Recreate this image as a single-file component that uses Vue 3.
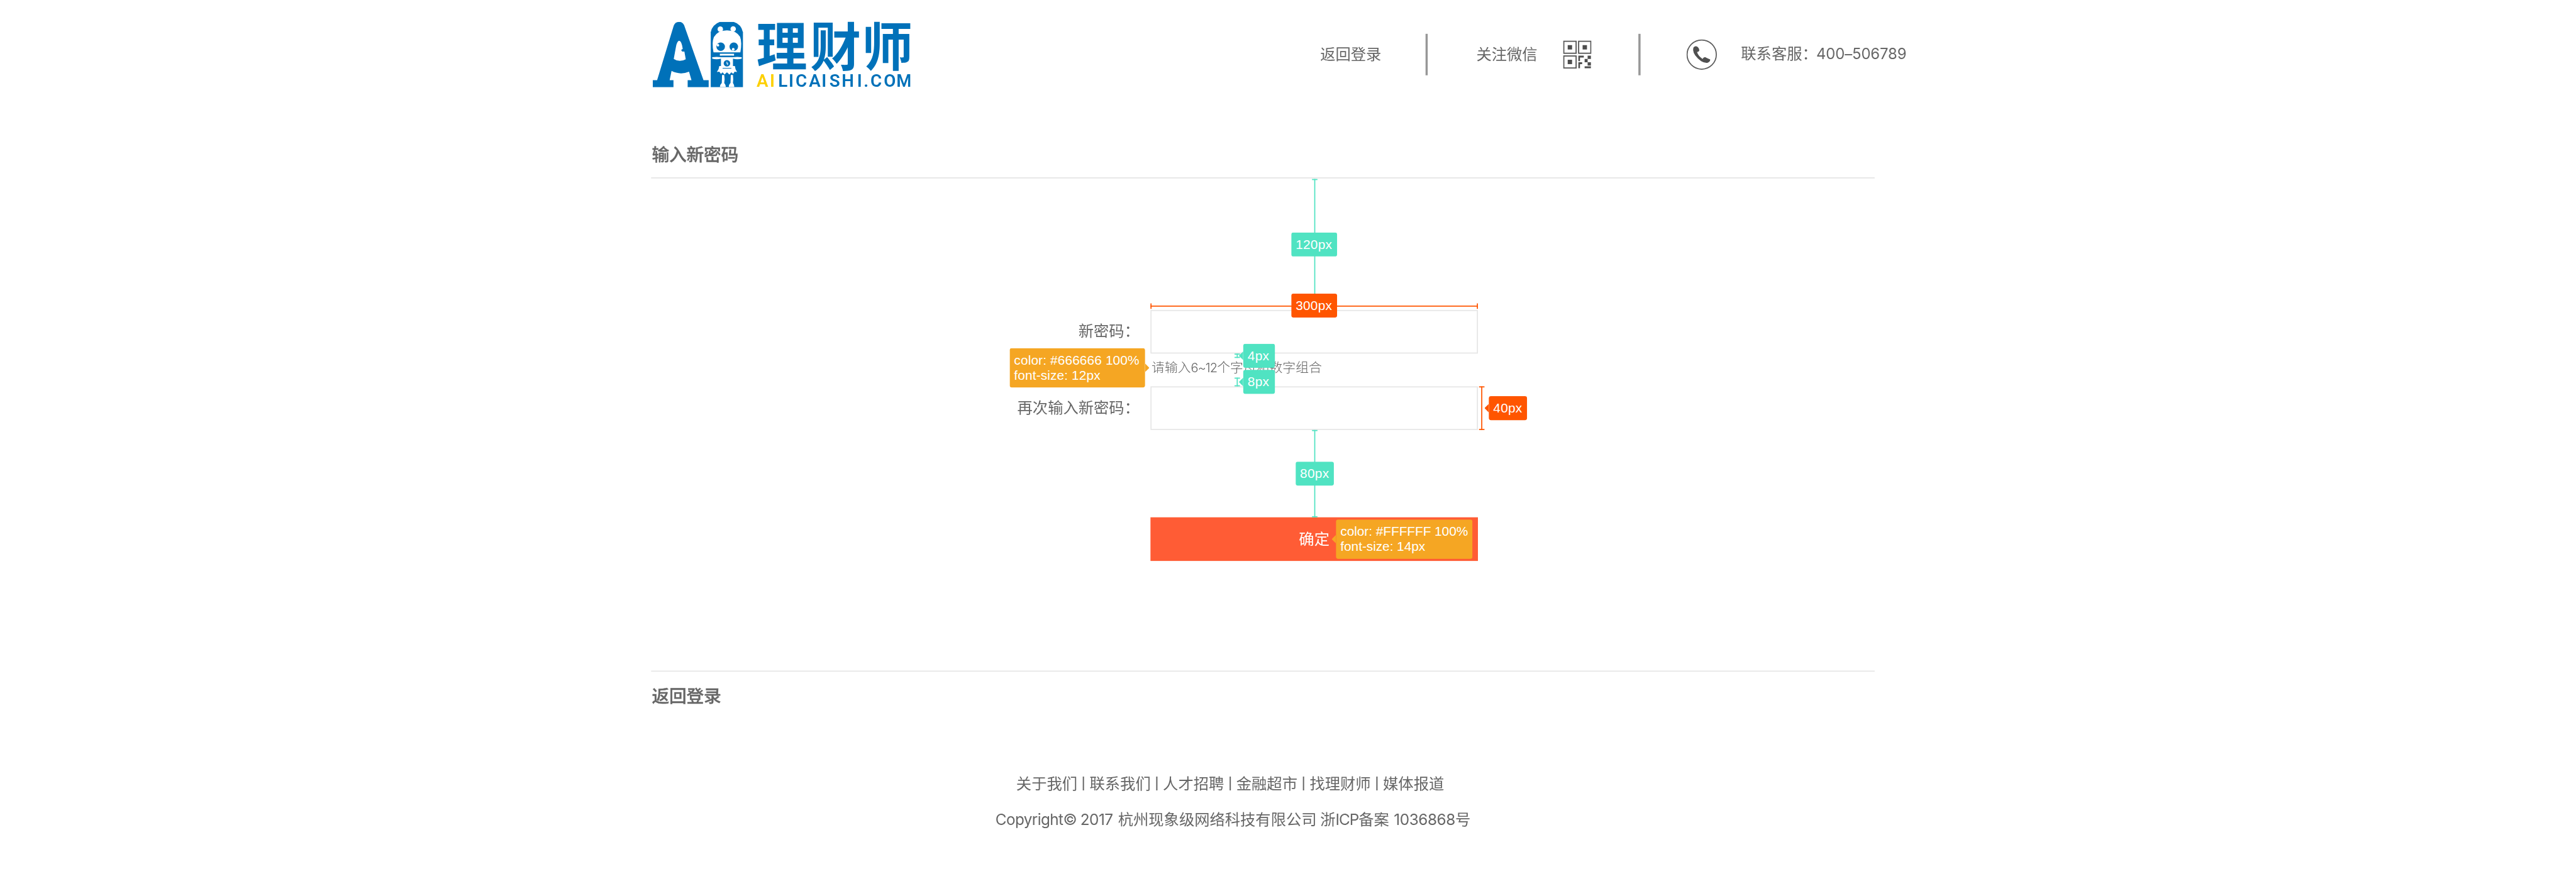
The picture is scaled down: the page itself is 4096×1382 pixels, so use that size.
<script setup>
const footerLinks = ['关于我们', '联系我们', '人才招聘', '金融超市', '找理财师', '媒体报道']

// Measuring bars: x/y of the box, its length, its direction and colour
const rulers = [
  { id: 'v120', dir: 'v', tone: 'green', x: 2404, y: 328, len: 240 },
  { id: 'h300', dir: 'h', tone: 'red', x: 2108, y: 556, len: 600 },
  { id: 'v4', dir: 'v', tone: 'green', x: 2262, y: 648, len: 8 },
  { id: 'v8', dir: 'v', tone: 'green', x: 2262, y: 692, len: 16 },
  { id: 'v40', dir: 'v', tone: 'red', x: 2710, y: 708, len: 80 },
  { id: 'v80', dir: 'v', tone: 'green', x: 2404, y: 788, len: 160 },
]

const tags = [
  { id: 't120', tone: 'green', x: 2366, y: 426, w: 84, lines: ['120px'] },
  { id: 't300', tone: 'red', x: 2366, y: 538, w: 84, lines: ['300px'] },
  { id: 't4', tone: 'green', arrow: 'left', x: 2278, y: 630, w: 58, lines: ['4px'] },
  { id: 't8', tone: 'green', arrow: 'left', x: 2278, y: 678, w: 58, lines: ['8px'] },
  { id: 't40', tone: 'red', arrow: 'left', x: 2728, y: 726, w: 70, lines: ['40px'] },
  { id: 't80', tone: 'green', x: 2374, y: 846, w: 70, lines: ['80px'] },
  { id: 'spec-hint', tone: 'amber', arrow: 'right', x: 1850, y: 638, w: 248, lines: ['color: #666666 100%', 'font-size: 12px'] },
  { id: 'spec-button', tone: 'amber', arrow: 'left', x: 2448, y: 952, w: 250, lines: ['color: #FFFFFF 100%', 'font-size: 14px'] },
]

const logoLetters = [
  ['A', 201], ['I', 219], ['L', 238.5], ['I', 253.7], ['C', 272.3], ['A', 297], ['I', 314],
  ['S', 333.3], ['H', 357.5], ['I', 379], ['.', 391], ['C', 409.3], ['O', 434.5], ['M', 460.5],
]
const brandXs = logoLetters.map((l) => l[1]).join(' ')

function rulerStyle(r) {
  const size = r.dir === 'v' ? { height: r.len + 'px' } : { width: r.len + 'px' }
  return { left: r.x + 'px', top: r.y + 'px', ...size }
}
function tagStyle(t) {
  return { left: t.x + 'px', top: t.y + 'px', width: t.w + 'px' }
}
</script>

<template>
  <div class="viewport">
    <div class="page">
      <header class="header">
        <svg class="logo" width="472" height="120" viewBox="0 0 472 120">
          <g fill="#0071b9">
            <path
              fill-rule="evenodd"
              d="M0 120V107H8L38.500 7Q41 0 48 0Q54.500 0 57.500 6L93 107H102.500V120H64V107H71L66.500 91.500Q50 98 34.500 90L31 107H38V120ZM38.500 68Q49 75 60.500 68.500L58 54.500L54 54.500L52 51.500L55 49.500Q53 35 48.500 34.500Q44.500 35 42.500 46Z"
            />
            <path d="M106.300 120V19Q109 5 123 0H148Q162 4 165.300 19V120Z" />
          </g>
          <g fill="#fff">
            <circle cx="123.800" cy="13.500" r="5" />
            <circle cx="147.400" cy="13" r="5" />
            <path d="M111.300 56Q108 38 112 28Q119 15.500 136 15.500Q153 15.500 160 27.500Q164 38 160.500 56Z" />
            <path d="M123 58.500H149V62H123Z" />
            <path d="M109 65Q117 63.500 125 65H147Q155 63.500 163 65V67.500Q155 69.500 147 67.500V81H150.500Q151 87 154.500 92L150 91.500L147.500 95.500L144 92.500L140.500 96.500L136 92.500L131.500 96.500L128 92.500L125 95.500L122 91.500L117.500 92Q121.500 87 122 81H125V67.500Q117 69.500 109 67.500Z" />
            <path d="M127 97.500H131Q132.500 106 131 112Q134.500 116 134 119.500H123Q123 115 126.500 112ZM143 97.500H147Q148 106 147 112Q150 116 149.500 119.500H139.500Q139 115 142.500 112Z" />
          </g>
          <g fill="#0071b9">
            <circle cx="124.500" cy="45.500" r="7.800" />
            <circle cx="148.500" cy="45.500" r="7.800" />
            <circle cx="136" cy="76" r="6" />
            <path d="M126 62.300H146V63.500H126ZM128 84.500H144V85.500H128Z" />
          </g>
          <g fill="#fff">
            <circle cx="119.500" cy="43" r="2.300" />
            <circle cx="147.500" cy="50.500" r="2.500" />
            <path d="M135 73H136.500V75H138V79H136V77H135Z" opacity=".7" />
          </g>
          <text class="brand-cn" x="190 288.500 383.500" y="77.500" transform="scale(1 1.045)">理财师</text>
          <text class="brand-en" :x="brandXs" y="119.500"><tspan fill="#fdd000">AI</tspan>LICAISHI.COM</text>
        </svg>

        <nav class="nav">
          <span class="nav-text">返回登录</span>
          <i class="bar bar-a"></i>
          <span class="nav-text">关注微信</span>
          <svg class="qr" width="52" height="52" viewBox="0 0 52 52">
            <g fill="none" stroke="#5a5a5a" stroke-width="2.200">
              <rect x="1.300" y="1.600" width="22.600" height="22" />
              <rect x="28.500" y="1.600" width="22.400" height="22" />
              <rect x="1.300" y="28.600" width="22.600" height="22" />
            </g>
            <g fill="#4d4d4d">
              <rect x="8.500" y="8.700" width="8" height="8" />
              <rect x="35.800" y="8.700" width="8" height="8" />
              <rect x="8.500" y="35.500" width="8" height="8" />
              <path d="M28 28H38V31.500H31V38H28ZM28 40H35V43.500H31V51H28ZM45 28H51V34H45V40H51V46H45V40H39.500V34H45ZM39.500 47.500H51V51H39.500Z" />
            </g>
          </svg>
          <i class="bar bar-b"></i>
          <svg class="phone" width="56" height="56" viewBox="0 0 56 56">
            <circle cx="28" cy="28" r="26.800" fill="none" stroke="#5c5c5c" stroke-width="2" />
            <path
              fill="#505050"
              d="M13 15Q16 11.500 20 13.500Q24 16.500 23.500 21Q22 23 19.500 23.500Q21.500 30.500 29.500 36Q31 33 34 32.500Q39 35 43.500 37Q44 41 39 43Q33.500 44 27 40Q13 30 12.300 20Q12.300 17 13 15Z"
            />
          </svg>
          <span class="nav-text">联系客服：<span class="latin tel">400–506789</span></span>
        </nav>
      </header>

      <main class="main">
        <h1 class="title">输入新密码</h1>
        <form class="form" @submit.prevent>
          <div class="row">
            <label class="label" for="pwd">新密码：</label>
            <input id="pwd" class="field" type="password" />
          </div>
          <p class="hint">请输入<span class="latin range">6~12</span>个字母和数字组合</p>
          <div class="row">
            <label class="label" for="pwd2">再次输入新密码：</label>
            <input id="pwd2" class="field" type="password" />
          </div>
          <button class="submit" type="submit">确定</button>
        </form>
        <h2 class="title back">返回登录</h2>
      </main>

      <footer class="footer">
        <div class="links">
          <template v-for="(link, i) in footerLinks" :key="link">
            <span v-if="i" class="sep">|</span>
            <span>{{ link }}</span>
          </template>
        </div>
        <div class="copy">
          <span class="latin cr">Copyright©</span>
          <span class="latin year">2017</span>
          <span class="company">杭州现象级网络科技有限公司</span>
          <span>浙<span class="latin icp">ICP</span>备案</span>
          <span class="record"><span class="latin num">1036868</span>号</span>
        </div>
      </footer>

      <div class="notes">
        <i v-for="r in rulers" :key="r.id" class="ruler" :class="[r.dir, r.tone]" :style="rulerStyle(r)"></i>
        <div v-for="t in tags" :key="t.id" class="tag" :class="[t.tone, t.arrow, t.id]" :style="tagStyle(t)">
          <span v-for="line in t.lines" :key="line">{{ line }}</span>
        </div>
      </div>
    </div>
  </div>
</template>

<style>
html,
body {
  margin: 0;
  background: #fff;
  overflow: hidden;
}
</style>

<style scoped>
.viewport {
  width: 4096px;
  height: 1382px;
  overflow: hidden;
  background: #fff;
}
.page {
  position: relative;
  width: 4720px;
  height: 1592px;
  transform: scale(0.8678);
  transform-origin: 0 0;
  font-family: 'Noto Sans CJK SC', sans-serif;
  font-size: 28px;
  line-height: 40px;
  color: #666;
  white-space: nowrap;
}
.latin {
  font-family: Inter, sans-serif;
}
.header {
  display: flex;
  align-items: center;
  height: 200px;
  padding-left: 1196px;
}
.logo {
  display: block;
  flex: none;
}
.brand-cn {
  font: 700 93px 'Noto Sans CJK SC', sans-serif;
  fill: #0071b9;
}
.brand-en {
  font: 600 32px Roboto, sans-serif;
  text-anchor: middle;
  fill: #0071b9;
}
.nav {
  display: flex;
  align-items: center;
  margin-left: 751px;
}
.nav-text {
  margin-bottom: 7px;
}
.bar {
  width: 4px;
  height: 76px;
  background: #979797;
}
.bar-a {
  margin: 0 89px 0 81px;
}
.qr {
  margin-left: 47px;
}
.bar-b {
  margin: 0 84px 0 86px;
}
.phone {
  margin-right: 44px;
}
.tel {
  margin-left: -2px;
  font-size: 27.5px;
  letter-spacing: -0.15px;
}
.main {
  width: 2242px;
  margin-left: 1193px;
  padding-top: 57px;
}
.title {
  margin: 0;
  padding: 0 0 20px 1.5px;
  border-bottom: 2px solid #e6e6e6;
  font-size: 32px;
  font-weight: 500;
  line-height: 48px;
  letter-spacing: -0.35px;
  -webkit-text-stroke: 0.4px #666;
}
.back {
  margin-top: 201px;
  padding: 18px 0 0 1.5px;
  border-top: 2px solid #e6e6e6;
  border-bottom: 0;
}
.form {
  display: flex;
  flex-direction: column;
  padding-top: 241px;
}
.row {
  display: flex;
  align-items: center;
  height: 80px;
}
.label {
  width: 895px;
  margin: 0 20px 7px 0;
  text-align: right;
}
.field {
  box-sizing: border-box;
  width: 600px;
  height: 80px;
  margin: 0;
  padding: 0 20px;
  border: 2px solid #e6e6e6;
  border-radius: 0;
  background: #fff;
  font: inherit;
  outline: 0;
}
.hint {
  height: 60px;
  margin: 0 0 0 917px;
  font-size: 24px;
  font-weight: 300;
  line-height: 47px;
}
.range {
  font-size: 23px;
  letter-spacing: -1px;
}
.submit {
  width: 600px;
  height: 80px;
  margin: 160px 0 0 915px;
  padding: 0 0 4px;
  border: 0;
  background: #ff5c35;
  font: inherit;
  line-height: 76px;
  color: #fff;
}
.footer {
  padding: 117px 0 0 1824px;
}
.links {
  display: flex;
  padding-left: 38px;
}
.sep {
  width: 22.4px;
  font-family: 'Liberation Sans', sans-serif;
  text-align: center;
}
.copy {
  display: flex;
  align-items: baseline;
  margin-top: 26px;
}
.cr {
  width: 155.5px;
  letter-spacing: -0.7px;
}
.year {
  width: 69px;
  letter-spacing: -0.6px;
}
.company {
  margin-right: 6.5px;
}
.icp {
  letter-spacing: -1.2px;
}
.record {
  margin-left: 8.5px;
}
.num {
  letter-spacing: -0.45px;
}
.notes {
  position: absolute;
  inset: 0;
  pointer-events: none;
}
.green {
  --c: #50e3c2;
}
.red {
  --c: #ff5500;
}
.amber {
  --c: #f5a623;
}
.ruler {
  position: absolute;
  width: 10px;
  height: 10px;
}
.ruler.v {
  background:
    linear-gradient(var(--c), var(--c)) 0 0 / 10px 2px no-repeat,
    linear-gradient(var(--c), var(--c)) 0 100% / 10px 2px no-repeat,
    linear-gradient(var(--c), var(--c)) 4px 0 / 2px 100% no-repeat;
}
.ruler.h {
  background:
    linear-gradient(var(--c), var(--c)) 0 0 / 2px 10px no-repeat,
    linear-gradient(var(--c), var(--c)) 100% 0 / 2px 10px no-repeat,
    linear-gradient(var(--c), var(--c)) 0 4px / 100% 2px no-repeat;
}
.tag {
  position: absolute;
  box-sizing: border-box;
  display: flex;
  flex-direction: column;
  padding: 8px;
  border-radius: 4px;
  background: var(--c);
  color: #fff;
  font: 24px/28px 'Liberation Sans', sans-serif;
  letter-spacing: 0.3px;
}
.tag.spec-hint {
  letter-spacing: 0.15px;
}
.tag.spec-button {
  letter-spacing: -0.05px;
}
.left::before,
.right::before {
  content: '';
  position: absolute;
  top: 50%;
  width: 8px;
  height: 16px;
  margin-top: -8px;
  background: var(--c);
}
.left::before {
  right: 100%;
  clip-path: polygon(100% 0, 100% 100%, 0 50%);
}
.right::before {
  left: 100%;
  clip-path: polygon(0 0, 0 100%, 100% 50%);
}
</style>
